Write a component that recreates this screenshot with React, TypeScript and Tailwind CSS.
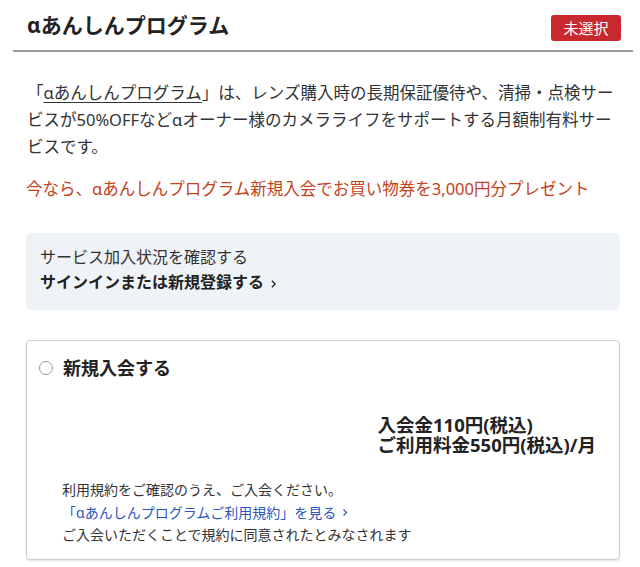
const font = { fontFamily: '"Noto Sans", "Noto Sans CJK JP", sans-serif' };

function Chevron({ className = "" }: { className?: string }) {
  return (
    <svg viewBox="0 0 8 12" className={className} fill="none" stroke="currentColor" strokeWidth="1.6">
      <path d="M2 2l4 4-4 4" />
    </svg>
  );
}

export default function App() {
  return (
    <div className="bg-white min-h-screen pl-[13px] pr-[7px] text-[#333]" style={font}>
      <header className="flex justify-between items-start pt-[11px] pb-[9px] pl-[14px] pr-[12px] border-b-2 border-[#999]">
        <h1 className="text-[21px] leading-[28px] font-bold text-[#222]">αあんしんプログラム</h1>
        <span className="mt-[4px] h-[26px] w-[70px] flex items-center justify-center rounded-[3px] bg-[#c8292e] text-white text-[15px]">
          未選択
        </span>
      </header>

      <div className="px-[13px]">
        <p className="mt-[27px] text-[16.5px] leading-[27px] pl-[1px]">
          「<span className="underline underline-offset-[3px]">αあんしんプログラム</span>」は、レンズ購入時の長期保証優待や、清掃・点検サービスが50%OFFなどαオーナー様のカメラライフをサポートする月額制有料サービスです。
        </p>
        <p className="mt-[15px] text-[16.5px] leading-[27px] text-[#c4411a]">
          今なら、αあんしんプログラム新規入会でお買い物券を3,000円分プレゼント
        </p>

        <div className="mt-[31px] rounded-[5px] bg-[#eff2f7] px-[14px] pt-[12px] pb-[15px] text-[16px] leading-[25px]">
          <p>サービス加入状況を確認する</p>
          <a className="flex items-center gap-[6px] font-bold text-[#222]">
            サインインまたは新規登録する
            <Chevron className="w-[7px] h-[10px] mt-[2px]" />
          </a>
        </div>

        <div className="mt-[30px] rounded-[4px] border border-[#ccc] shadow-[0_1px_2px_rgba(0,0,0,0.12)] pt-[13px] pb-[12px]">
          <label className="flex items-center gap-[10px] pl-[12px]">
            <span className="w-[14px] h-[14px] rounded-full border border-[#999] bg-white" />
            <span className="text-[18px] leading-[28px] font-bold text-[#222]">新規入会する</span>
          </label>

          <div className="mt-[33px] flex justify-end pr-[23px]">
            <div className="text-[18.5px] leading-[20px] font-bold text-[#222]">
              <p>入会金110円(税込)</p>
              <p>ご利用料金550円(税込)/月</p>
            </div>
          </div>

          <div className="mt-[24px] pl-[35px] text-[14px] leading-[22.5px]">
            <p>利用規約をご確認のうえ、ご入会ください。</p>
            <a className="flex items-center gap-[6px] text-[#2d55bd]">
              「αあんしんプログラムご利用規約」を見る
              <Chevron className="w-[6px] h-[9px]" />
            </a>
            <p>ご入会いただくことで規約に同意されたとみなされます</p>
          </div>
        </div>
      </div>
    </div>
  );
}
